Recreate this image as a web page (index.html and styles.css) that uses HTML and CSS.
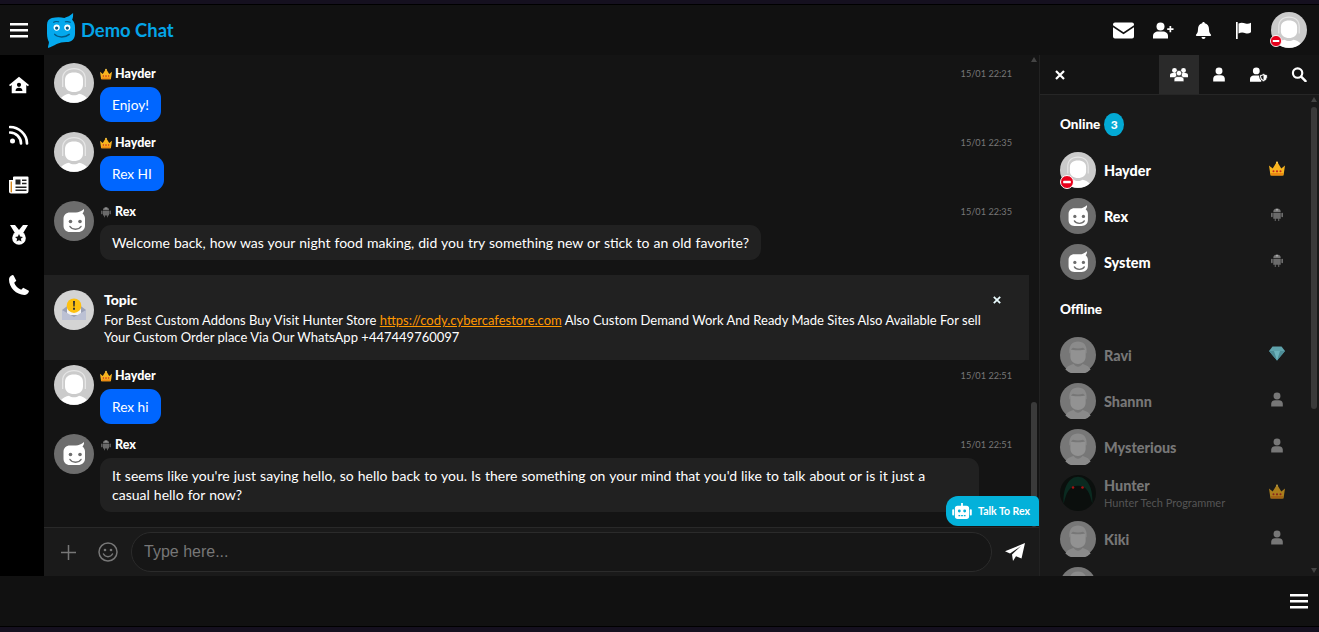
FILE: index.html
```html
<!DOCTYPE html>
<html lang="en">
<head>
<meta charset="utf-8">
<title>Demo Chat</title>
<link rel="stylesheet" href="styles.css">
</head>
<body>
<svg class="defs" width="0" height="0" aria-hidden="true">
  <symbol id="av-user" viewBox="0 0 40 40">
    <circle cx="20" cy="20" r="20" fill="#cbcbcb"/>
    <path d="M8 24V16C8 9 13 5 20 5s12 4 12 11v8h-1.300V16c0-6-4-9.700-10.700-9.700S9.300 10 9.300 16v8z" fill="#e6e6e6"/>
    <path d="M11 17c0-5 3.500-7.500 9-7.500s9 2.500 9 7.500v4.500c0 5-4 7.500-9 7.500s-9-2.500-9-7.500z" fill="#fff"/>
    <path d="M7 35c2-2.500 5-3.700 8-4.300 1.500 1 3 1.500 5 1.500s3.500-.5 5-1.500c3 .6 6 1.800 8 4.300a20 20 0 0 1-26 0z" fill="#fff"/>
  </symbol>
  <symbol id="av-off" viewBox="0 0 40 40">
    <circle cx="20" cy="20" r="20" fill="#777"/>
    <path d="M10.500 18C9.500 9 14 5 20 5s10.500 4 9.500 13h-1c0-3-1-5-3-6-3 1-8 1-11 0-2 1-3 3-3 6z" fill="#8b8b8b"/>
    <path d="M11.500 14c3 1 14 1 17 0v8c0 5-4 8-8.500 8s-8.500-3-8.500-8z" fill="#929292"/>
    <path d="M6 36c2-4 6-5 9-6 2 2 3 3 5 3s3-1 5-3c3 1 7 2 9 6a20 20 0 0 1-28 0z" fill="#8a8a8a"/>
  </symbol>
  <symbol id="av-bot" viewBox="0 0 40 40">
    <circle cx="20" cy="20" r="20" fill="#6d6d6d"/>
    <path d="M16 11.500h6c2.500 0 5.500-1.200 8-3.500.2 1.800-.4 3.300-1.500 4.500 1.500 1.200 2.500 3 2.500 5v7c0 4-3 6.500-7 6.500h-8c-4 0-6.500-2.500-6.500-6.500v-6.500c0-4 2.500-6.500 6.500-6.500z" fill="#fff"/>
    <circle cx="16.500" cy="20.500" r="1.800" fill="#6d6d6d"/>
    <circle cx="26" cy="20.500" r="1.800" fill="#6d6d6d"/>
    <path d="M16 25.500c2 3.500 9 3.500 11 0" fill="none" stroke="#6d6d6d" stroke-width="1.500" stroke-linecap="round"/>
  </symbol>
  <symbol id="crown" viewBox="0 0 16 14">
    <path d="M0 4l3.700 3L8 0l4.300 7L16 4l-1.500 10h-13z" fill="#f8b41f"/>
    <circle cx="8" cy="1" r="1" fill="#fcd15a"/>
    <path d="M1.900 11.500h12.200l-.4 2.500H2.300z" fill="#ee8a12"/>
    <circle cx="4.500" cy="9.800" r="1" fill="#c8281e"/>
    <circle cx="8" cy="9.800" r="1.100" fill="#c8281e"/>
    <circle cx="11.500" cy="9.800" r="1" fill="#c8281e"/>
  </symbol>
  <symbol id="android" viewBox="0 0 14 16">
    <path d="M3 5.500a4 4 0 0 1 8 0z" fill="#777"/>
    <path d="M3 6.300h8v6.200H9.400v2.500H8.300v-2.500H5.700v2.500H4.600v-2.500H3z" fill="#6a6a6a"/>
    <rect x=".7" y="6" width="1.600" height="5" rx=".8" fill="#777"/>
    <rect x="11.700" y="6" width="1.600" height="5" rx=".8" fill="#777"/>
    <circle cx="7" cy="2.800" r=".9" fill="#bbb"/>
  </symbol>
  <symbol id="person" viewBox="0 0 14 16">
    <circle cx="7" cy="4.200" r="3.700" fill="currentColor"/>
    <path d="M.8 15.500v-3C.8 10 3 8.800 4.800 8.800h4.400c1.800 0 4 1.200 4 3.700v3z" fill="currentColor"/>
  </symbol>
  <symbol id="block" viewBox="0 0 14 14">
    <circle cx="7" cy="7" r="6.500" fill="#e8001b" stroke="#fff" stroke-width="1"/>
    <rect x="3.200" y="5.700" width="7.600" height="2.600" rx=".6" fill="#fff"/>
  </symbol>
  <symbol id="burger" viewBox="0 0 18 15">
    <path d="M0 0h18v2.400H0zM0 6h18v2.400H0zM0 12h18v2.400H0z" fill="#fff"/>
  </symbol>
  <symbol id="cross" viewBox="0 0 10 10">
    <path d="M1 1l8 8M9 1l-8 8" fill="none" stroke="currentColor" stroke-width="2.200"/>
  </symbol>
</svg>

<div class="strip strip-top"></div>

<header class="topbar">
  <button class="burger" aria-label="Menu"><svg class="i18"><use href="#burger"/></svg></button>
  <div class="brand">
    <svg class="logo" viewBox="0 0 30 36">
      <path d="M5 5c5-1 9-1 13 0 3-1 6-2 9-5 0 3 0 5-1 7 2 2 3 4 3 8v6c0 5-3 9-9 9-4 0-7 1-10 2-3 2-6 3-9 4 0-2 1-4 1-6-1-2-2-5-2-9V12c0-4 2-6 5-7z" fill="#04a9ee"/>
      <circle cx="10" cy="15" r="3.200" fill="#fff"/><circle cx="21" cy="15" r="3.200" fill="#fff"/>
      <circle cx="10" cy="15.500" r="1.700" fill="#045a86"/><circle cx="21" cy="15.500" r="1.700" fill="#045a86"/>
      <path d="M8 22c3 3.500 11 3.500 15 0" fill="none" stroke="#045a86" stroke-width="1.500" stroke-linecap="round"/>
      <path d="M7 9.500c1-1 3-1 5-.5M19 9c2-.5 3-.5 5 .5" fill="none" stroke="#045a86" stroke-width="1.200" stroke-linecap="round"/>
    </svg>
    <span class="brand-text">Demo Chat</span>
  </div>
  <div class="top-actions">
    <svg class="top-ico" viewBox="0 0 21 16"><path d="M2 0h17a2 2 0 0 1 2 2v.7l-10.500 7L0 2.700V2a2 2 0 0 1 2-2zM0 4.800l10.500 7 10.500-7V14a2 2 0 0 1-2 2H2a2 2 0 0 1-2-2z" fill="#fff"/></svg>
    <svg class="top-ico" viewBox="0 0 21 16"><circle cx="7.500" cy="4" r="4" fill="#fff"/><path d="M0 16v-2.500C0 10.500 2.500 9 5 9h5c2.500 0 5 1.500 5 4.500V16z" fill="#fff"/><path d="M16.500 3.500h1.700v2.300h2.300v1.700h-2.300v2.300h-1.700V7.500h-2.300V5.800h2.300z" fill="#fff"/></svg>
    <svg class="top-ico" viewBox="0 0 21 17"><path d="M10.500 0c.8 0 1.300.6 1.300 1.300 2.700.6 4.200 2.900 4.200 5.700 0 3.500 1 4.500 2 5.800.3.500 0 1.200-.7 1.200H3.700c-.7 0-1-.7-.7-1.200 1-1.300 2-2.300 2-5.800 0-2.800 1.500-5.100 4.200-5.700C9.200.6 9.700 0 10.500 0zM8.500 15h4a2 2 0 0 1-4 0z" fill="#fff"/></svg>
    <svg class="top-ico" viewBox="0 0 21 17"><path d="M3 0h1.700v17H3zM5.500 1.500c3-1.500 5-.5 7 0 2 .4 3.500.3 5.500-.7v9.500c-2 1.200-3.500 1.400-5.500.9-2-.5-4-1.200-7 .3z" fill="#fff"/></svg>
    <div class="me">
      <svg class="fill"><use href="#av-user"/></svg>
      <svg class="me-block"><use href="#block"/></svg>
    </div>
  </div>
</header>

<main class="shell">
  <nav class="sidenav">
    <svg class="nav-ico" viewBox="0 0 22 18"><path d="M11 0l11 9-1.200 1.500L19 9v9H3V9l-1.800 1.500L0 9zm0 6.500a2.300 2.300 0 1 0 0 4.600 2.300 2.300 0 0 0 0-4.600zM7.200 15.500h7.600c0-2.200-1.500-3.400-3.800-3.400s-3.800 1.200-3.800 3.400z" fill="#fff" fill-rule="evenodd"/></svg>
    <svg class="nav-ico" viewBox="0 0 20 18"><circle cx="3.500" cy="15" r="2.500" fill="#fff"/><path d="M1 6.500c6 0 11 5 11 11M1 1c9 0 17 7.500 17 16.500" fill="none" stroke="#fff" stroke-width="2.700" stroke-linecap="round"/></svg>
    <svg class="nav-ico" viewBox="0 0 20 18"><path d="M4 1.500a1 1 0 0 1 1-1h13.500a1 1 0 0 1 1 1V15a2.500 2.500 0 0 1-2.500 2.500H2A2 2 0 0 1 0 15.500V4h4z" fill="#fff"/><path d="M1.600 5.500H3v10.300a.7.700 0 0 1-1.400 0z" fill="#d88a1f"/><path d="M6.500 3.500h5v5h-5zM13 3.500h4.500V5H13zM13 6.800h4.500v1.500H13zM6.500 10.500h11V12h-11zM6.500 13.500h11V15h-11z" fill="#222"/></svg>
    <svg class="nav-ico" viewBox="0 0 20 20"><path d="M1 0h5l4 5 4-5h5l-5 8.200H6z" fill="#fff"/><circle cx="10" cy="13" r="6.800" fill="#fff"/><path d="M10 9l1.200 2.600 2.800.3-2.100 1.900.6 2.800-2.500-1.400-2.500 1.400.6-2.800L6 11.900l2.800-.3z" fill="#111"/></svg>
    <svg class="nav-ico" viewBox="0 0 20 20"><path d="M4.600.6l2.700 5.200-2.100 2a12 12 0 0 0 7 7l2-2.100 5.200 2.700c.4.200.6.700.5 1.100-.7 2.100-2.500 3.500-4.500 3.500C7.400 20 0 12.600 0 4.600 0 2.600 1.400.8 3.500.1c.4-.1.900.1 1.100.5z" fill="#fff"/></svg>
  </nav>

  <section class="chat">
    <div class="chat-main">
      <div class="messages">
        <article class="msg">
          <svg class="msg-av"><use href="#av-user"/></svg>
          <div class="msg-body">
            <div class="msg-head"><svg class="rank"><use href="#crown"/></svg><span class="msg-name">Hayder</span><time class="msg-time">15/01 22:21</time></div>
            <p class="bubble bubble-blue">Enjoy!</p>
          </div>
        </article>
        <article class="msg">
          <svg class="msg-av"><use href="#av-user"/></svg>
          <div class="msg-body">
            <div class="msg-head"><svg class="rank"><use href="#crown"/></svg><span class="msg-name">Hayder</span><time class="msg-time">15/01 22:35</time></div>
            <p class="bubble bubble-blue">Rex HI</p>
          </div>
        </article>
        <article class="msg">
          <svg class="msg-av"><use href="#av-bot"/></svg>
          <div class="msg-body">
            <div class="msg-head"><svg class="rank"><use href="#android"/></svg><span class="msg-name">Rex</span><time class="msg-time">15/01 22:35</time></div>
            <p class="bubble bubble-dark">Welcome back, how was your night food making, did you try something new or stick to an old favorite?</p>
          </div>
        </article>
        <aside class="topic">
          <svg class="topic-av" viewBox="0 0 40 40">
            <circle cx="20" cy="20" r="20" fill="#d4d4d4"/>
            <path d="M8 20l12-9 12 9v10H8z" fill="#9aa0b5"/>
            <path d="M13 13h14v12H13z" fill="#f3f3f3"/>
            <circle cx="20" cy="15.700" r="7.300" fill="#fdc010"/>
            <path d="M19 11h2l-.3 5.500h-1.400zM19 17.700h2v2h-2z" fill="#333"/>
            <path d="M8 20l12 7 12-7v10H8z" fill="#bcc1d4"/>
          </svg>
          <div class="topic-body">
            <h3 class="topic-title">Topic</h3>
            <p class="topic-text">For Best Custom Addons Buy Visit Hunter Store <a class="topic-link" href="#">https://cody.cybercafestore.com</a> Also Custom Demand Work And Ready Made Sites Also Available For sell Your Custom Order place Via Our WhatsApp +447449760097</p>
          </div>
          <svg class="topic-close"><use href="#cross"/></svg>
        </aside>
        <article class="msg">
          <svg class="msg-av"><use href="#av-user"/></svg>
          <div class="msg-body">
            <div class="msg-head"><svg class="rank"><use href="#crown"/></svg><span class="msg-name">Hayder</span><time class="msg-time">15/01 22:51</time></div>
            <p class="bubble bubble-blue">Rex hi</p>
          </div>
        </article>
        <article class="msg">
          <svg class="msg-av"><use href="#av-bot"/></svg>
          <div class="msg-body">
            <div class="msg-head"><svg class="rank"><use href="#android"/></svg><span class="msg-name">Rex</span><time class="msg-time">15/01 22:51</time></div>
            <p class="bubble bubble-dark bubble-wide">It seems like you're just saying hello, so hello back to you. Is there something on your mind that you'd like to talk about or is it just a casual hello for now?</p>
          </div>
        </article>
      </div>
      <div class="scroll scroll-chat"><i class="arrow-up"></i><b class="thumb"></b></div>
      <div class="talk-btn">
        <svg class="talk-ico" viewBox="0 0 22 18"><path d="M10 0h2v3h4a3 3 0 0 1 3 3v9a3 3 0 0 1-3 3H6a3 3 0 0 1-3-3V6a3 3 0 0 1 3-3h4z" fill="#fff"/><rect y="7" width="2.200" height="7" rx="1" fill="#fff"/><rect x="19.800" y="7" width="2.200" height="7" rx="1" fill="#fff"/><circle cx="8" cy="9" r="1.600" fill="#03b1da"/><circle cx="14" cy="9" r="1.600" fill="#03b1da"/><path d="M7 13.500h2v1.500H7zM10 13.500h2v1.500h-2zM13 13.500h2v1.500h-2z" fill="#03b1da"/></svg>
        <span>Talk To Rex</span>
      </div>
    </div>
    <form class="composer">
      <svg class="comp-ico" viewBox="0 0 16 16"><path d="M7.200 0h1.600v7.200H16v1.600H8.800V16H7.200V8.800H0V7.200h7.200z" fill="#777"/></svg>
      <svg class="comp-smile" viewBox="0 0 20 20"><circle cx="10" cy="10" r="9" fill="none" stroke="#777" stroke-width="1.500"/><circle cx="7" cy="8" r="1.300" fill="#777"/><circle cx="13" cy="8" r="1.300" fill="#777"/><path d="M5.500 12c2 3.500 7 3.500 9 0" fill="none" stroke="#777" stroke-width="1.500" stroke-linecap="round"/></svg>
      <input class="comp-input" type="text" placeholder="Type here...">
      <svg class="comp-send" viewBox="0 0 20 18"><path d="M20 0L16.500 15.500 11 13.200 8 18l-1-6.500L16 3 5 10.500 0 8.300z" fill="#fff"/></svg>
    </form>
  </section>

  <aside class="panel">
    <div class="panel-tabs">
      <svg class="panel-x"><use href="#cross"/></svg>
      <div class="tab tab-on"><svg class="tab-ico" viewBox="0 0 20 16"><circle cx="5" cy="3.500" r="2.700" fill="#fff"/><circle cx="15" cy="3.500" r="2.700" fill="#fff"/><path d="M0 11V9c0-1.800 1.200-2.700 3-2.700h4v4.700zM20 11V9c0-1.800-1.200-2.700-3-2.700h-4v4.700z" fill="#fff"/><circle cx="10" cy="6.500" r="3.100" fill="#fff" stroke="#2a2a2a" stroke-width=".8"/><path d="M4.500 16v-2.500C4.500 11.500 6 10.300 8 10.300h4c2 0 3.500 1.200 3.500 3.200V16z" fill="#fff" stroke="#2a2a2a" stroke-width=".8"/></svg></div>
      <div class="tab"><svg class="tab-ico"><use href="#person"/></svg></div>
      <div class="tab"><svg class="tab-ico" viewBox="0 0 20 16"><circle cx="7" cy="4" r="3.800" fill="#fff"/><path d="M0 16v-3c0-2.500 2-4 4-4h6c1 0 2 .3 2.500 1v6z" fill="#fff"/><path d="M15 7l4.500 1.700c0 4-1.500 6-4.500 7.300-3-1.300-4.500-3.300-4.500-7.300z" fill="#fff" stroke="#1a1a1a"/><path d="M15 8.800v5.500c-1.700-1-2.600-2.400-2.700-4.500z" fill="#1a1a1a"/></svg></div>
      <div class="tab"><svg class="tab-ico" viewBox="0 0 16 16"><circle cx="6.500" cy="6.500" r="5" fill="none" stroke="#fff" stroke-width="2.300"/><path d="M10.300 10.300L15 15" stroke="#fff" stroke-width="2.600" stroke-linecap="round"/></svg></div>
    </div>
    <div class="panel-body">
      <div class="panel-list">
        <h4 class="group">Online <span class="count">3</span></h4>
        <div class="user">
          <div class="user-av"><svg class="fill"><use href="#av-user"/></svg><svg class="user-block"><use href="#block"/></svg></div>
          <div class="user-info"><span class="user-name">Hayder</span></div>
          <svg class="user-rank"><use href="#crown"/></svg>
        </div>
        <div class="user">
          <div class="user-av"><svg class="fill"><use href="#av-bot"/></svg></div>
          <div class="user-info"><span class="user-name">Rex</span></div>
          <svg class="user-rank"><use href="#android"/></svg>
        </div>
        <div class="user">
          <div class="user-av"><svg class="fill"><use href="#av-bot"/></svg></div>
          <div class="user-info"><span class="user-name">System</span></div>
          <svg class="user-rank"><use href="#android"/></svg>
        </div>
        <h4 class="group group-off">Offline</h4>
        <div class="user user-off">
          <div class="user-av"><svg class="fill"><use href="#av-off"/></svg></div>
          <div class="user-info"><span class="user-name">Ravi</span></div>
          <svg class="user-rank" viewBox="0 0 16 14"><path d="M3.500 0h9L16 4.500 8 14 0 4.500z" fill="#5fa2ab"/><path d="M0 4.500h16L8 14z" fill="#4c8b95"/><path d="M5 4.500L8 14l3-9.500z" fill="#6cb2bb"/></svg>
        </div>
        <div class="user user-off">
          <div class="user-av"><svg class="fill"><use href="#av-off"/></svg></div>
          <div class="user-info"><span class="user-name">Shannn</span></div>
          <svg class="user-rank user-person"><use href="#person"/></svg>
        </div>
        <div class="user user-off">
          <div class="user-av"><svg class="fill"><use href="#av-off"/></svg></div>
          <div class="user-info"><span class="user-name">Mysterious</span></div>
          <svg class="user-rank user-person"><use href="#person"/></svg>
        </div>
        <div class="user user-off">
          <div class="user-av">
            <svg class="fill" viewBox="0 0 40 40"><circle cx="20" cy="20" r="20" fill="#0b0f0d"/><path d="M4 32C3 14 10 2 20 2s17 12 16 30c-3-12-6-20-16-20S7 20 4 32z" fill="#0a2a20"/><circle cx="14.500" cy="14" r="1.400" fill="#a81212"/><circle cx="25" cy="14" r="1.400" fill="#a81212"/></svg>
          </div>
          <div class="user-info"><span class="user-name">Hunter</span><span class="user-mood">Hunter Tech Programmer</span></div>
          <svg class="user-rank user-crown-off"><use href="#crown"/></svg>
        </div>
        <div class="user user-off">
          <div class="user-av"><svg class="fill"><use href="#av-off"/></svg></div>
          <div class="user-info"><span class="user-name">Kiki</span></div>
          <svg class="user-rank user-person"><use href="#person"/></svg>
        </div>
        <div class="user user-off">
          <div class="user-av"><svg class="fill"><use href="#av-off"/></svg></div>
        </div>
      </div>
      <div class="scroll scroll-panel"><i class="arrow-up"></i><b class="thumb"></b><i class="arrow-down"></i></div>
    </div>
  </aside>
</main>

<footer class="footbar">
  <button class="burger" aria-label="Menu"><svg class="i18"><use href="#burger"/></svg></button>
</footer>
<div class="strip strip-bottom"></div>
</body>
</html>
```
FILE: styles.css
```css
* { box-sizing: border-box; }
html, body { margin: 0; height: 100%; }
body {
  display: flex;
  flex-direction: column;
  height: 632px;
  overflow: hidden;
  background: #111;
  color: #fff;
  font-family: Lato, "Liberation Sans", sans-serif;
  font-size: 14px;
}
.defs { position: absolute; }
.fill { display: block; width: 100%; height: 100%; }
.i18 { display: block; width: 18px; height: 15px; }

.strip { background: #15101f; flex: none; }
.strip-top { height: 5px; border-bottom: 1px solid #000; }
.strip-bottom { height: 6px; border-top: 1px solid #000; }

.topbar {
  flex: none;
  display: flex;
  align-items: center;
  height: 50px;
  padding: 0 12px 0 10px;
  background: #111;
}
.burger { padding: 0; border: 0; background: none; }
.brand { display: flex; align-items: center; margin-left: 19px; }
.logo { width: 29px; height: 35px; }
.brand-text {
  margin-left: 5px;
  color: #04a5e8;
  font-size: 18.400px;
  font-weight: 700;
}
.top-actions { display: flex; align-items: center; margin-left: auto; }
.top-ico { width: 21px; height: 17px; margin-right: 19px; }
.me { position: relative; width: 36px; height: 36px; margin-left: -2px; }
.me-block { position: absolute; left: -1px; bottom: 1px; width: 12px; height: 12px; }

.shell { flex: 1; display: flex; min-height: 0; }

.sidenav {
  flex: none;
  display: flex;
  flex-direction: column;
  align-items: center;
  width: 44px;
  padding: 20px 6px 0 0;
  gap: 30px;
  background: #000;
}
.nav-ico { width: 20px; height: 20px; }

.chat {
  flex: none;
  display: flex;
  flex-direction: column;
  width: 995px;
  background: #141414;
}
.chat-main { position: relative; flex: 1; min-height: 0; display: flex; }
.messages { flex: 1; min-width: 0; overflow: hidden; padding-top: 3px; }

.msg { display: flex; padding: 5px 17px 5px 10px; }
.msg-av { flex: none; width: 40px; height: 40px; margin-right: 6px; }
.msg-body { flex: 1; min-width: 0; }
.msg-head { display: flex; align-items: center; height: 21px; margin-bottom: 3px; }
.rank { width: 12px; height: 12px; margin-right: 3px; }
.msg-name { font-size: 12.500px; font-weight: 900; line-height: 20px; }
.msg-time { margin-left: auto; color: #777; font-size: 9.200px; }

.bubble {
  display: table;
  margin: 0;
  padding: 8px 12px;
  border-radius: 11px;
  font-size: 14px;
  line-height: 19px;
}
.bubble-blue { background: #0066ff; font-size: 13.700px; }
.bubble-dark { background: #212121; word-spacing: .5px; }
.bubble-wide { width: 879px; padding-right: 24px; }

.topic {
  position: relative;
  display: flex;
  height: 85px;
  margin-top: 10px;
  padding: 15px 32px 0 10px;
  background: #212121;
}
.topic-av { flex: none; width: 40px; height: 40px; margin-right: 10px; }
.topic-body { padding-top: 1px; }
.topic-title { margin: 0 0 3px; font-size: 14px; font-weight: 900; line-height: 18px; }
.topic-text { margin: 0; font-size: 13px; line-height: 17px; word-spacing: .1px; }
.topic-link { color: #ff9800; }
.topic-close { position: absolute; right: 28px; top: 21px; width: 8px; height: 8px; color: #eafcff; }

.scroll {
  position: relative;
  flex: none;
}
.scroll-chat { width: 10px; }
.thumb { position: absolute; left: 2px; right: 2px; background: #3a3a3a; border-radius: 3px; }
.scroll-chat .thumb { top: 347px; height: 125px; }
.arrow-up, .arrow-down { position: absolute; left: 2px; width: 0; height: 0; border-style: solid; border-color: transparent; }
.arrow-up { top: 2px; border-width: 0 3px 5px; border-bottom-color: #444; }
.arrow-down { bottom: 3px; border-width: 5px 3px 0; border-top-color: #444; }

.talk-btn {
  position: absolute;
  right: 0;
  bottom: 1px;
  display: flex;
  align-items: center;
  gap: 6px;
  width: 93px;
  height: 30px;
  padding: 0 0 0 6px;
  background: #03b1da;
  border-radius: 12px 5px 0 12px;
  font-size: 10.500px;
  font-weight: 700;
}
.talk-ico { width: 20px; height: 16px; }

.composer {
  flex: none;
  display: flex;
  align-items: center;
  height: 49px;
  padding: 0 14px 0 17px;
  background: #1a1a1a;
  border-top: 1px solid #292929;
  margin: 0;
}
.comp-ico { flex: none; width: 15px; height: 15px; }
.comp-smile { flex: none; width: 20px; height: 20px; margin-left: 22px; }
.comp-input {
  flex: 1;
  min-width: 0;
  height: 40px;
  margin: 0 13px;
  padding: 0 12px;
  background: #161616;
  border: 1px solid #2b2b2b;
  border-radius: 20px;
  color: #fff;
  font-family: "Liberation Sans", sans-serif;
  font-size: 16px;
  outline: 0;
}
.comp-input::placeholder { color: #777; opacity: 1; }
.comp-send { flex: none; width: 20px; height: 18px; }

.panel {
  flex: 1;
  min-width: 0;
  display: flex;
  flex-direction: column;
  background: #191919;
  border-left: 1px solid #222;
}
.panel-tabs {
  flex: none;
  display: flex;
  align-items: center;
  height: 40px;
  background: #141414;
  border-bottom: 1px solid #262626;
}
.panel-x { width: 10px; height: 10px; margin: 0 auto 0 15px; color: #fff; }
.tab { display: flex; align-items: center; justify-content: center; width: 40px; height: 39px; }
.tab-on { background: #2a2a2a; }
.tab-ico { width: 18px; height: 15px; color: #fff; }

.panel-body { flex: 1; min-height: 0; display: flex; }
.panel-list { flex: 1; min-width: 0; overflow: hidden; padding: 0 26px 0 20px; }
.scroll-panel { width: 8px; }
.scroll-panel .thumb { top: 12px; height: 302px; left: 0; right: 2px; }
.scroll-panel .arrow-up, .scroll-panel .arrow-down { left: 0; }

.group { display: flex; align-items: center; gap: 4px; height: 22px; margin: 18px 0 12px; font-size: 13.500px; font-weight: 900; }
.group-off { height: 18px; margin: 15px 0 14px; }
.count {
  display: flex;
  flex: none;
  align-items: center;
  justify-content: center;
  width: 20px;
  height: 23px;
  border-radius: 50%;
  background: #03a9d4;
  font-size: 12px;
}
.user { display: flex; align-items: center; height: 46px; }
.user-av { position: relative; flex: none; width: 36px; height: 36px; margin-right: 8px; }
.user-block { position: absolute; left: 0; bottom: -1px; width: 14px; height: 14px; }
.user-info { flex: 1; min-width: 0; display: flex; flex-direction: column; padding-top: 2px; }
.user-name { font-size: 14.400px; font-weight: 900; line-height: 18px; }
.user-mood { color: #555; font-size: 11px; line-height: 16px; }
.user-rank { flex: none; width: 16px; height: 15px; margin-bottom: 3px; }
.user-off .user-name { color: #777; }
.user-person { color: #777; }
.user-crown-off { opacity: .65; }

.footbar {
  flex: none;
  display: flex;
  align-items: center;
  justify-content: flex-end;
  height: 50px;
  padding-right: 11px;
  background: #111;
}
```
